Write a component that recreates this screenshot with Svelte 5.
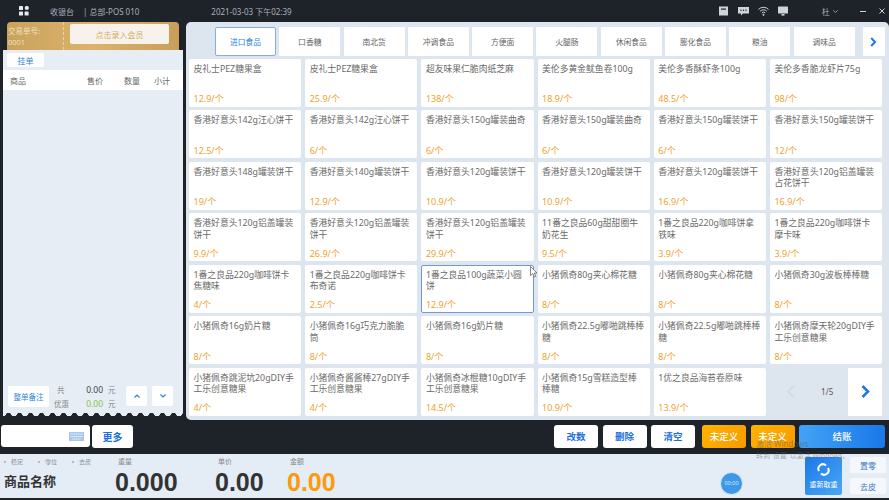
<script lang="ts">
  type Goods = { name: string; price: string; active?: boolean };

  const tabs = ["进口食品", "口香糖", "南北货", "冲调食品", "方便面", "火腿肠", "休闲食品", "膨化食品", "粮油", "调味品"];

  const goods: Goods[] = [
    { name: "皮礼士PEZ糖果盒", price: "12.9" },
    { name: "皮礼士PEZ糖果盒", price: "25.9" },
    { name: "超友味果仁脆肉纸芝麻", price: "138" },
    { name: "美伦多黄金鱿鱼卷100g", price: "18.9" },
    { name: "美伦多香酥虾条100g", price: "48.5" },
    { name: "美伦多香脆龙虾片75g", price: "98" },
    { name: "香港好意头142g汪心饼干", price: "12.5" },
    { name: "香港好意头142g汪心饼干", price: "6" },
    { name: "香港好意头150g罐装曲奇", price: "6" },
    { name: "香港好意头150g罐装曲奇", price: "6" },
    { name: "香港好意头150g罐装饼干", price: "6" },
    { name: "香港好意头150g罐装饼干", price: "12" },
    { name: "香港好意头148g罐装饼干", price: "19" },
    { name: "香港好意头140g罐装饼干", price: "12.9" },
    { name: "香港好意头120g罐装饼干", price: "10.9" },
    { name: "香港好意头120g罐装饼干", price: "10.9" },
    { name: "香港好意头120g罐装饼干", price: "16.9" },
    { name: "香港好意头120g铝盖罐装占花饼干", price: "16.9" },
    { name: "香港好意头120g铝盖罐装饼干", price: "9.9" },
    { name: "香港好意头120g铝盖罐装饼干", price: "26.9" },
    { name: "香港好意头120g铝盖罐装饼干", price: "29.9" },
    { name: "11番之良品60g甜甜圈牛奶花生", price: "9.5" },
    { name: "1番之良品220g咖啡饼拿铁味", price: "3.9" },
    { name: "1番之良品220g咖啡饼卡摩卡味", price: "3.9" },
    { name: "1番之良品220g咖啡饼卡焦糖味", price: "4" },
    { name: "1番之良品220g咖啡饼卡布奇诺", price: "2.5" },
    { name: "1番之良品100g蔬菜小圆饼", price: "12.9", active: true },
    { name: "小猪佩奇80g夹心棉花糖", price: "8" },
    { name: "小猪佩奇80g夹心棉花糖", price: "8" },
    { name: "小猪佩奇30g波板棒棒糖", price: "8" },
    { name: "小猪佩奇16g奶片糖", price: "8" },
    { name: "小猪佩奇16g巧克力脆脆筒", price: "8" },
    { name: "小猪佩奇16g奶片糖", price: "8" },
    { name: "小猪佩奇22.5g嘟啪跳棒棒糖", price: "8" },
    { name: "小猪佩奇22.5g嘟啪跳棒棒糖", price: "8" },
    { name: "小猪佩奇摩天轮20gDIY手工乐创意糖果", price: "8" },
    { name: "小猪佩奇跳泥坑20gDIY手工乐创意糖果", price: "4" },
    { name: "小猪佩奇酱酱棒27gDIY手工乐创意糖果", price: "4" },
    { name: "小猪佩奇冰棍糖10gDIY手工乐创意糖果", price: "14.5" },
    { name: "小猪佩奇15g雪糕造型棒棒糖", price: "10.9" },
    { name: "1优之良品海苔卷原味", price: "13.9" }
  ];
</script>

<div class="app">
  <header class="topbar">
    <svg class="logo" width="10" height="10" viewBox="0 0 10 10" fill="#e6e9ee">
      <rect x="0" y="0" width="4" height="4" rx="0.6" />
      <circle cx="7.8" cy="2" r="2.1" />
      <rect x="0" y="5.6" width="4" height="4" rx="0.6" />
      <rect x="5.6" y="5.6" width="4" height="4" rx="0.6" />
    </svg>
    <span class="cashier">收银台</span>
    <span class="store">| 总部-POS 010</span>
    <span class="clock">2021-03-03 下午02:39</span>
    <div class="tools">
      <svg width="10" height="10" viewBox="0 0 10 10"><rect width="9" height="9" y="0.5" fill="#cfd3d8" /><rect x="2" y="2.5" width="5" height="1.2" fill="#1e2229" /></svg>
      <svg width="11" height="10" viewBox="0 0 11 10"><path d="M0 1h11v6.5H5L3 9.5V7.5H0z" fill="#cfd3d8" /><circle cx="3" cy="4.2" r=".7" fill="#1e2229" /><circle cx="5.5" cy="4.2" r=".7" fill="#1e2229" /><circle cx="8" cy="4.2" r=".7" fill="#1e2229" /></svg>
      <svg width="11" height="10" viewBox="0 0 11 10" fill="none" stroke="#cfd3d8" stroke-width="1"><path d="M.5 3.4a7 7 0 0 1 10 0M2.2 5.2a4.6 4.6 0 0 1 6.6 0M3.8 7a2.2 2.2 0 0 1 3.4 0" /><circle cx="5.5" cy="8.8" r=".6" fill="#cfd3d8" /></svg>
      <svg width="11" height="10" viewBox="0 0 11 10" fill="#cfd3d8"><rect y="0.5" width="10" height="7" rx=".6" /><rect x="3.5" y="8" width="3" height="1.6" /></svg>
    </div>
    <span class="user">杜</span>
    <svg class="caret" width="5" height="3" viewBox="0 0 5 3" fill="none" stroke="#aab0b8" stroke-width=".8"><path d="M.3.3 2.5 2.5 4.7.3" /></svg>
    <span class="win"></span>
    <svg class="close" width="6" height="6" viewBox="0 0 6 6" stroke="#cfd3d8" stroke-width="1"><path d="M.5.5l5 5M5.5.5l-5 5" /></svg>
  </header>

  <main class="middle">
    <section class="left">
      <div class="member">
        <div class="order">交易单号:<br />0001</div>
        <button class="member-btn">点击录入会员</button>
      </div>
      <div class="ticket">
        <button class="hold">挂单</button>
        <div class="thead">
          <span>商品</span><span>售价</span><span>数量</span><span>小计</span>
        </div>
        <div class="tbody"></div>
        <div class="summary">
          <button class="note">整单备注</button>
          <div class="totals">
            <div class="line"><span class="k">共</span><span class="v">0.00</span><span class="u">元</span></div>
            <div class="line"><span class="k">优惠</span><span class="v green">0.00</span><span class="u">元</span></div>
          </div>
          <button class="step">
            <svg width="6" height="4" viewBox="0 0 6 4" fill="none" stroke="#2f7fe0" stroke-width="1.2"><path d="M.5 3.5 3 1l2.5 2.5" /></svg>
          </button>
          <button class="step">
            <svg width="6" height="4" viewBox="0 0 6 4" fill="none" stroke="#2f7fe0" stroke-width="1.2"><path d="M.5.5 3 3 5.5.5" /></svg>
          </button>
        </div>
        <div class="scallop"></div>
      </div>
    </section>

    <section class="right">
      <nav class="tabs">
        {#each tabs as t, i}
          <button class="tab" class:current={i === 0}>{t}</button>
        {/each}
        <button class="tab-next">
          <svg width="7" height="10" viewBox="0 0 7 10" fill="none" stroke="#1c78e6" stroke-width="2"><path d="M1.2 1 5 5 1.2 9" /></svg>
        </button>
      </nav>
      <div class="grid">
        {#each goods as g}
          <div class="card" class:active={g.active}>
            <div class="name">{g.name}</div>
            <div class="price">{g.price}/个</div>
          </div>
        {/each}
        <div class="pager">
          <svg class="prev" width="9" height="13" viewBox="0 0 9 13" fill="none" stroke="#d3dbe4" stroke-width="2.4"><path d="M7.5 1 2 6.5l5.5 5.5" /></svg>
          <span class="pages">1/5</span>
          <button class="next">
            <svg width="9" height="13" viewBox="0 0 9 13" fill="none" stroke="#1c78e6" stroke-width="2.6"><path d="M1.5 1 7 6.5l-5.5 5.5" /></svg>
          </button>
        </div>
      </div>
    </section>
  </main>

  <div class="actions">
    <div class="scan">
      <svg width="15" height="9" viewBox="0 0 15 9"><rect width="15" height="9" fill="#a9c6ec" /><path d="M1.5 2h12M1.5 4.5h12M3.5 7h8" stroke="#f3f7fc" stroke-width="1" stroke-dasharray="1.2 .6" /></svg>
    </div>
    <button class="btn more">更多</button>
    <div class="spacer"></div>
    <button class="btn">改数</button>
    <button class="btn">删除</button>
    <button class="btn">清空</button>
    <button class="btn orange first">未定义</button>
    <button class="btn orange">未定义</button>
    <button class="btn pay">结账</button>
  </div>

  <footer class="scale">
    <div class="product">
      <div class="flags"><span>稳定</span><span>零位</span><span>去皮</span></div>
      <div class="pname">商品名称</div>
    </div>
    <div class="reading weight"><span class="cap">重量</span><b>0.000</b></div>
    <div class="reading unit"><span class="cap">单价</span><b>0.00</b></div>
    <div class="reading amount"><span class="cap">金额</span><b>0.00</b></div>
    <div class="timer">00:00</div>
    <button class="reweigh">
      <svg width="13" height="13" viewBox="0 0 13 13" fill="none" stroke="#fff" stroke-width="2"><path d="M2 8a4.5 4.5 0 0 1 7-5.5M11 5a4.5 4.5 0 0 1-7 5.5" /></svg>
      <span>重新取重</span>
    </button>
    <div class="mini">
      <button>置零</button>
      <button>去皮</button>
    </div>
  </footer>

  <div class="watermark">激活 Windows<br /><small>转到"设置"以激活 Windows。</small></div>
  <svg class="cursor" width="8" height="12" viewBox="0 0 8 12"><path d="M.5.5v9l2.3-2 1.5 3.5 1.5-.7L4.3 7H7z" fill="#fff" stroke="#555" stroke-width=".7" /></svg>
</div>

<style>
  :global(body) {
    margin: 0;
    background: #1e2229;
  }

  .app {
    position: relative;
    width: 889px;
    height: 500px;
    overflow: hidden;
    display: flex;
    flex-direction: column;
    background: #1e2229;
    font-family: "Noto Sans", "Noto Sans CJK SC", sans-serif;
    color: #666;
  }

  button {
    font-family: inherit;
    border: none;
    padding: 0;
    cursor: pointer;
  }

  .topbar {
    height: 22px;
    flex: none;
    display: flex;
    align-items: center;
    font-size: 8px;
    color: #aab0b8;
  }
  .logo { margin-left: 19px; }
  .cashier { margin-left: 21px; }
  .store { margin-left: 9px; }
  .clock { margin-left: 72px; }
  .tools {
    margin-left: 427px;
    display: flex;
    gap: 9px;
    align-items: center;
  }
  .user { margin-left: 33px; }
  .caret { margin-left: 3px; }
  .win {
    width: 6px;
    height: 1px;
    margin-left: 22px;
    background: #cfd3d8;
  }
  .close { margin-left: 13px; }

  .middle {
    height: 398px;
    flex: none;
    display: flex;
  }

  .left {
    width: 186px;
    flex: none;
    padding-left: 3px;
    box-sizing: border-box;
    display: flex;
    flex-direction: column;
  }
  .member {
    height: 28px;
    flex: none;
    margin: 0 4px;
    width: 172px;
    box-sizing: border-box;
    display: flex;
    align-items: flex-start;
    border-radius: 4px 4px 0 0;
    background: linear-gradient(90deg, #c9a25c, #dcb36b 50%, #c79f59);
  }
  .order {
    width: 57px;
    height: 28px;
    box-sizing: border-box;
    padding: 4px 0 0 1px;
    font-size: 7.5px;
    line-height: 11px;
    color: #efe0c0;
    border-right: 1px dashed #e6d3ab;
  }
  .member-btn {
    width: 99px;
    height: 20px;
    margin: 2px 0 0 6px;
    border-radius: 2px;
    background: #f7f3ec;
    color: #d5ab62;
    font-size: 8px;
  }
  .ticket {
    width: 180px;
    height: 366px;
    box-sizing: border-box;
    flex: none;
    display: flex;
    flex-direction: column;
    background: #e6edf5;
  }
  .hold {
    width: 37px;
    height: 14px;
    margin: 3px 0 3px 4px;
    border-radius: 2px;
    background: #fff;
    color: #2f7fe0;
    font-size: 8px;
    flex: none;
  }
  .thead {
    height: 20px;
    flex: none;
    display: grid;
    grid-template-columns: 77px 37px 30px 1fr;
    align-items: center;
    padding-left: 7px;
    background: #fff;
    font-size: 8px;
    color: #666;
  }
  .tbody { flex: 1; }
  .summary {
    height: 22px;
    flex: none;
    display: flex;
    align-items: center;
    padding-left: 5px;
    margin-bottom: 4px;
  }
  .note {
    width: 41px;
    height: 21px;
    background: #fff;
    border-radius: 2px;
    color: #2f7fe0;
    font-size: 7.5px;
  }
  .totals {
    width: 72px;
    margin-left: 5px;
    font-size: 8px;
  }
  .line {
    display: grid;
    grid-template-columns: 16px 33px 1fr;
    height: 14px;
    align-items: center;
    color: #888;
  }
  .line:first-child .k { padding-left: 3px; }
  .k { font-size: 7.5px; }
  .v {
    text-align: right;
    color: #444;
    font-size: 8.5px;
  }
  .green { color: #8bc34a; }
  .u {
    padding-left: 5px;
    font-size: 7.5px;
  }
  .step {
    width: 21px;
    height: 20px;
    background: #fff;
    border-radius: 2px;
    margin-right: 5px;
    display: flex;
    align-items: center;
    justify-content: center;
  }
  .scallop {
    height: 5px;
    flex: none;
    background: radial-gradient(circle at 5.5px 5px, #1e2229 3px, transparent 3.3px) 0 0 / 11px 5px repeat-x;
  }

  .right {
    flex: 1;
    box-sizing: border-box;
    padding: 5px 0 0 3px;
    background: #dde5ef;
    border-radius: 5px 5px 0 5px;
  }
  .tabs {
    height: 29px;
    display: flex;
    gap: 3.3px;
    padding-left: 26px;
  }
  .tab {
    width: 61px;
    height: 29px;
    flex: none;
    background: #fff;
    font-size: 7.8px;
    color: #666;
  }
  .tab.current {
    color: #2f7fe0;
    border: 1px solid #86aee0;
    border-radius: 2px;
  }
  .tab-next {
    width: 22px;
    height: 29px;
    margin-left: 5px;
    flex: none;
    background: #fff;
    display: flex;
    align-items: center;
    justify-content: center;
  }
  .grid {
    margin-top: 3px;
    display: grid;
    grid-template-columns: repeat(6, 112.3px);
    grid-auto-rows: 47.7px;
    gap: 3.8px 3.9px;
  }
  .card {
    background: #fff;
    border-radius: 2px;
    box-sizing: border-box;
    padding: 5px 5.5px 1.5px 4.5px;
    display: flex;
    flex-direction: column;
    justify-content: space-between;
  }
  .card.active {
    outline: 1px solid #6f9ad6;
    outline-offset: -1px;
  }
  .name {
    font-size: 8.8px;
    line-height: 11.5px;
    color: #6a6a6a;
  }
  .price {
    font-size: 9px;
    line-height: 12px;
    color: #f0a22e;
  }
  .pager {
    display: flex;
    align-items: center;
    justify-content: flex-end;
  }
  .prev { margin-right: 26px; }
  .pages {
    font-size: 8px;
    margin-right: 15px;
    color: #555;
  }
  .next {
    width: 34px;
    height: 48px;
    background: #fff;
    display: flex;
    align-items: center;
    justify-content: center;
  }

  .actions {
    height: 32px;
    flex: none;
    display: flex;
    align-items: center;
    box-sizing: border-box;
    padding: 0 4px 0 1px;
  }
  .scan {
    width: 89px;
    height: 22px;
    box-sizing: border-box;
    background: #fff;
    border-radius: 3px;
    display: flex;
    align-items: center;
    justify-content: flex-end;
    padding-right: 6px;
  }
  .btn {
    width: 44px;
    height: 23px;
    margin-left: 4.5px;
    background: #fff;
    border-radius: 3px;
    color: #1c6fdc;
    font-size: 9.5px;
    font-weight: 700;
    flex: none;
  }
  .more {
    width: 41px;
    margin-left: 2px;
    font-size: 10px;
  }
  .spacer { flex: 1; }
  .orange {
    color: #fff;
    background: linear-gradient(135deg, #ffb300, #f79a00);
    font-weight: 500;
  }
  .orange.first { margin-left: 7px; }
  .pay {
    width: 86px;
    color: #fff;
    font-weight: 500;
    background: linear-gradient(90deg, #42a3f5, #1a78e8);
  }

  .scale {
    height: 44px;
    flex: none;
    margin-top: 2px;
    display: flex;
    background: #e4ecf5;
    position: relative;
  }
  .product {
    width: 115px;
    flex: none;
    padding-left: 4px;
    box-sizing: border-box;
  }
  .flags {
    display: flex;
    gap: 22px;
    padding: 3px 0 0 7px;
    font-size: 6px;
    color: #8a8f96;
  }
  .flags span::before {
    content: "";
    display: inline-block;
    width: 2px;
    height: 2px;
    margin: 0 5px 1px -7px;
    border-radius: 50%;
    background: #a5abb3;
  }
  .pname {
    margin-top: 6px;
    font-size: 13px;
    line-height: 18px;
    font-weight: 700;
    color: #333;
  }
  .reading {
    display: flex;
    flex-direction: column;
    flex: none;
  }
  .cap {
    font-size: 7px;
    line-height: 10px;
    margin-top: 3px;
    padding-left: 3px;
    color: #888;
  }
  .reading b {
    font-family: "Liberation Sans", sans-serif;
    font-size: 25px;
    line-height: 30px;
    color: #333;
  }
  .weight { width: 100px; }
  .unit { width: 72px; }
  .amount { width: 110px; }
  .amount b { color: #fb9a0a; }
  .timer {
    width: 21px;
    height: 21px;
    margin: 19px 0 0 324px;
    border-radius: 50%;
    background: #3f97e8;
    box-shadow: 0 0 0 1px #cfe3f7;
    color: #d6e9fb;
    font-size: 5.5px;
    line-height: 21px;
    text-align: center;
    flex: none;
  }
  .reweigh {
    width: 37px;
    height: 38px;
    margin: 3px 0 0 63px;
    border-radius: 2px;
    background: linear-gradient(135deg, #1c78e6, #4aa8f7);
    color: #fff;
    font-size: 7px;
    display: flex;
    flex-direction: column;
    align-items: center;
    justify-content: center;
    gap: 3px;
    flex: none;
  }
  .mini {
    margin: 3px 0 0 8px;
    display: flex;
    flex-direction: column;
    gap: 5px;
  }
  .mini button {
    width: 36px;
    height: 16px;
    background: #f4f7fb;
    border-radius: 2px;
    font-size: 8px;
    color: #3f79c4;
  }

  .watermark {
    position: absolute;
    left: 756px;
    top: 438px;
    font-size: 8px;
    line-height: 11px;
    color: rgba(90, 90, 90, 0.5);
    pointer-events: none;
  }
  .watermark small { font-size: 7px; }
  .cursor {
    position: absolute;
    left: 530px;
    top: 266px;
  }
</style>
